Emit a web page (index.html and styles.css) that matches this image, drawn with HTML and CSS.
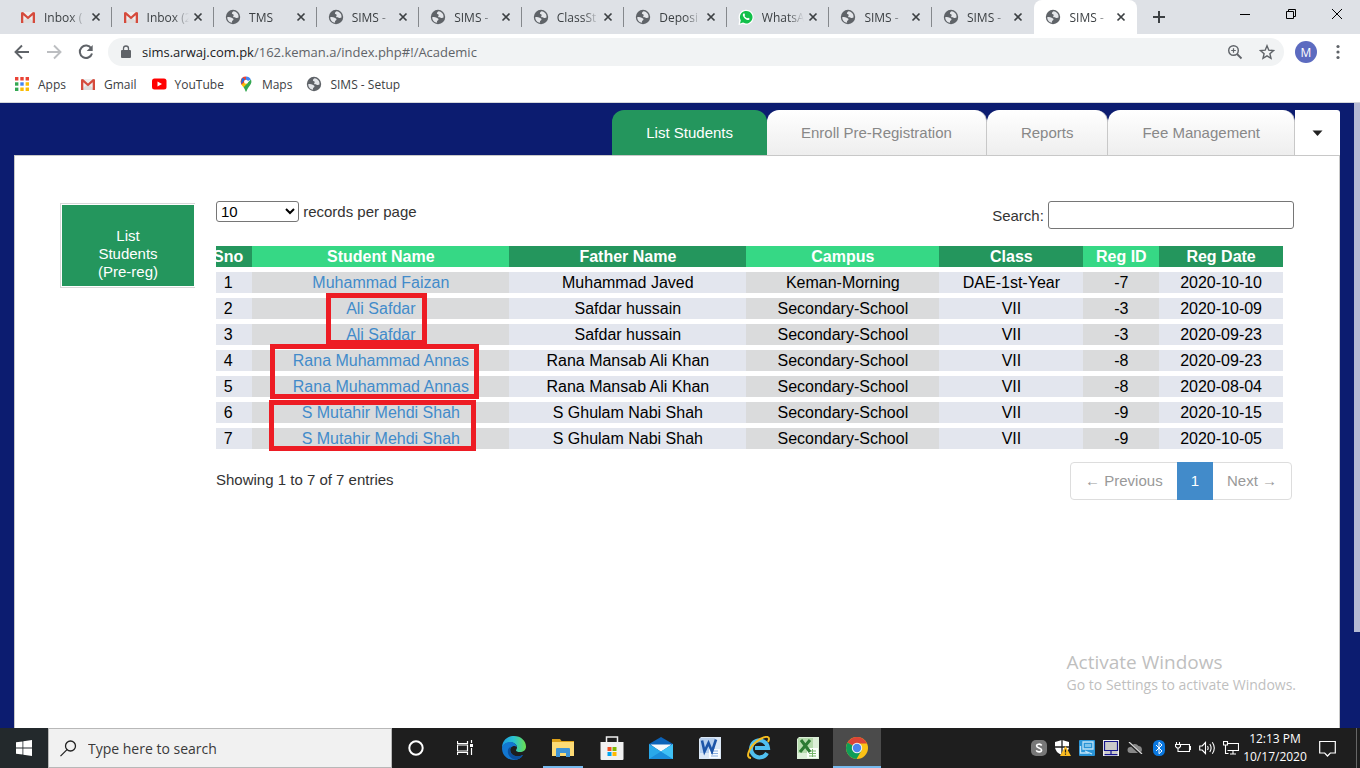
FILE: index.html
```html
<!DOCTYPE html>
<html lang="en">
<head>
<meta charset="utf-8">
<title>SIMS - Academic</title>
<link rel="stylesheet" href="styles.css">
</head>
<body>
<svg class="sprite" aria-hidden="true">
  <symbol id="globe" viewBox="0 0 16 16"><circle cx="8" cy="8" r="7.2" fill="#5f6368"/><path d="M8.6 2.3c-1.3.8-1.9 1.7-1.6 2.4.4.6 1.6.3 1.7 1.2.1.8-.9 1-.5 1.9.4.8 1.9.5 2.8 1.1.8.4 1.7.2 2.5-.3.4-3-1.4-5.9-4.900-6.300zM2.200 8.200c1.500-.3 3.300-.2 4.400.6.8.6 1.900.6 1.900 1.600s-1.300 1-1.500 1.900c-.1.500.2.900.1 1.500-2.800-.4-4.900-2.800-4.900-5.600z" fill="#e4e6ea"/></symbol>
  <symbol id="gmail" viewBox="0 0 16 16"><path d="M1 3h14v11H1z" fill="#eee"/><path d="M1 14 8 8l7 6z" fill="#ddd"/><path d="M1 14V3.500L3 3l5 4.500L13 3l2 .5V14h-2.300V6.200L8 10.200 3.300 6.200V14z" fill="#d54b3d"/></symbol>
  <symbol id="x" viewBox="0 0 10 10"><path d="m1.500 1.500 7 7m0-7-7 7" stroke="#3c4043" stroke-width="1.700" fill="none"/></symbol>
</svg>

<header class="browser">
  <div class="tabstrip">
    <div class="tabs">
      <div class="tab"><svg class="fav"><use href="#gmail"/></svg><a class="tab-title" href="#">Inbox (</a><button class="close" aria-label="Close tab"><svg><use href="#x"/></svg></button></div>
      <div class="tab"><svg class="fav"><use href="#gmail"/></svg><a class="tab-title" href="#">Inbox (2</a><button class="close" aria-label="Close tab"><svg><use href="#x"/></svg></button></div>
      <div class="tab"><svg class="fav"><use href="#globe"/></svg><a class="tab-title" href="#">TMS</a><button class="close" aria-label="Close tab"><svg><use href="#x"/></svg></button></div>
      <div class="tab"><svg class="fav"><use href="#globe"/></svg><a class="tab-title" href="#">SIMS -</a><button class="close" aria-label="Close tab"><svg><use href="#x"/></svg></button></div>
      <div class="tab"><svg class="fav"><use href="#globe"/></svg><a class="tab-title" href="#">SIMS -</a><button class="close" aria-label="Close tab"><svg><use href="#x"/></svg></button></div>
      <div class="tab"><svg class="fav"><use href="#globe"/></svg><a class="tab-title" href="#">ClassSt</a><button class="close" aria-label="Close tab"><svg><use href="#x"/></svg></button></div>
      <div class="tab"><svg class="fav"><use href="#globe"/></svg><a class="tab-title" href="#">Deposi</a><button class="close" aria-label="Close tab"><svg><use href="#x"/></svg></button></div>
      <div class="tab"><svg class="fav" viewBox="0 0 16 16"><path d="M.5 16 1.200 11A7.500 7.500 0 1 1 5 15z" fill="#fff"/><path d="m2 14.400.8-3A6.300 6.300 0 1 1 5 13.600z" fill="#12c04a"/><path d="M5.500 4.500c-1.300 1-.7 2.900 1 4.700 1.800 1.800 3.800 2.500 4.900 1.200.3-.5.2-.9 0-1l-1.300-.7c-.3-.1-.6.7-1 .6C7.900 8.800 7 7.900 6.600 7c-.1-.3.600-.6.500-1l-.6-1.300c-.2-.4-.7-.4-1-.2z" fill="#fff"/></svg><a class="tab-title" href="#">WhatsA</a><button class="close" aria-label="Close tab"><svg><use href="#x"/></svg></button></div>
      <div class="tab"><svg class="fav"><use href="#globe"/></svg><a class="tab-title" href="#">SIMS -</a><button class="close" aria-label="Close tab"><svg><use href="#x"/></svg></button></div>
      <div class="tab last"><svg class="fav"><use href="#globe"/></svg><a class="tab-title" href="#">SIMS -</a><button class="close" aria-label="Close tab"><svg><use href="#x"/></svg></button></div>
      <div class="tab active"><svg class="fav"><use href="#globe"/></svg><a class="tab-title" href="#">SIMS -</a><button class="close" aria-label="Close tab"><svg><use href="#x"/></svg></button></div>
    </div>
    <div class="newtab"><button aria-label="New tab"><svg width="14" height="14" viewBox="0 0 14 14"><path d="M7 1v12M1 7h12" stroke="#3c4043" stroke-width="2"/></svg></button></div>
    <div class="winctl">
      <button aria-label="Minimize"><svg width="12" height="12" viewBox="0 0 12 12"><path d="M1 6.500h10" stroke="#000"/></svg></button>
      <button aria-label="Restore"><svg width="12" height="12" viewBox="0 0 12 12"><path d="M1.500 3.500h7v7h-7zM3.500 3.500v-2h7v7h-2" stroke="#000" fill="none"/></svg></button>
      <button aria-label="Close"><svg width="12" height="12" viewBox="0 0 12 12"><path d="m1 1 10 10M11 1 1 11" stroke="#000"/></svg></button>
    </div>
  </div>
  <div class="toolbar">
    <button aria-label="Back"><svg width="16" height="16" viewBox="0 0 16 16"><path d="M15 8H2m6-6.500L1.500 8 8 14.500" stroke="#5f6368" stroke-width="1.900" fill="none"/></svg></button>
    <button aria-label="Forward"><svg width="16" height="16" viewBox="0 0 16 16"><path d="M1 8h13M8 1.500 14.500 8 8 14.500" stroke="#bcbec1" stroke-width="1.900" fill="none"/></svg></button>
    <button aria-label="Reload"><svg width="16" height="16" viewBox="0 0 16 16"><path d="M13.300 4.500A6.200 6.200 0 1 0 14 9.500" stroke="#5f6368" stroke-width="2" fill="none"/><path d="M14.700 1v6H8.700z" fill="#5f6368"/></svg></button>
    <div class="omnibox">
      <svg width="10" height="14" viewBox="0 0 10 14"><path d="M1 5h8q1 0 1 1v6q0 1-1 1H1q-1 0-1-1V6q0-1 1-1z" fill="#5f6368"/><path d="M2.500 5.500V3.500a2.500 2.500 0 0 1 5 0v2" stroke="#5f6368" stroke-width="1.300" fill="none"/></svg>
      <div class="url" role="textbox" aria-label="Address" contenteditable="true" spellcheck="false"><span class="host">sims.arwaj.com.pk</span>/162.keman.a/index.php#!/Academic</div>
      <button aria-label="Zoom"><svg width="16" height="16" viewBox="0 0 16 16"><circle cx="6.500" cy="6.500" r="4.800" stroke="#5f6368" stroke-width="1.400" fill="none"/><path d="m10 10 4.500 4.500" stroke="#5f6368" stroke-width="1.800"/><path d="M6.500 4.200v4.600M4.200 6.500h4.600" stroke="#5f6368" stroke-width="1.200"/></svg></button>
      <button aria-label="Bookmark"><svg width="16" height="16" viewBox="0 0 16 16"><path d="m8 1.800 1.800 4.400 4.700.4-3.600 3.100 1.100 4.600L8 11.900l-4 2.400 1.100-4.600-3.600-3.100 4.700-.4z" stroke="#5f6368" stroke-width="1.400" fill="none"/></svg></button>
    </div>
    <button class="avatar" aria-label="Profile">M</button>
    <button class="kebab" aria-label="Menu"><svg width="4" height="16" viewBox="0 0 4 16"><g fill="#5f6368"><circle cx="2" cy="2.500" r="1.600"/><circle cx="2" cy="8" r="1.600"/><circle cx="2" cy="13.500" r="1.600"/></g></svg></button>
  </div>
  <nav class="bookmarks">
    <a href="#"><svg class="fav" viewBox="0 0 16 16"><path d="M1 1h3.400v3.400H1zM6.300 1h3.400v3.400H6.300zM11.600 1H15v3.400h-3.400z" fill="#ea4335"/><path d="M1 6.300h3.400v3.400H1z" fill="#34a853"/><path d="M6.300 6.300h3.400v3.400H6.300z" fill="#4285f4"/><path d="M11.600 6.300H15v3.400h-3.400zM6.300 11.600h3.400V15H6.300zM11.600 11.600H15V15h-3.400z" fill="#fbbc05"/><path d="M1 11.600h3.400V15H1z" fill="#34a853"/></svg>Apps</a>
    <a href="#"><svg class="fav"><use href="#gmail"/></svg>Gmail</a>
    <a href="#"><svg class="fav" viewBox="0 0 16 16"><rect x="1" y="2.500" width="14.500" height="11" rx="2.500" fill="red"/><path d="m6.500 5.500 4.500 2.500-4.500 2.500z" fill="#fff"/></svg>YouTube</a>
    <a href="#"><svg class="fav" viewBox="0 0 16 16"><path d="M2.600 5.500A5.500 5.500 0 0 1 8 .5L8 5.800 4.200 9.500Q2.600 7.800 2.600 5.500z" fill="#ea4335"/><path d="M8 .5a5.500 5.500 0 0 1 4.900 2.900L8 6z" fill="#4285f4"/><path d="M4 2 3 8l2-2 2-3z" fill="#1a73e8"/><path d="m12.900 3.400c1 2 .5 4.200-1 6C10.300 11.600 9 13 8.500 15.500H7.500C7.200 13.500 6 12 5.400 11z" fill="#34a853"/><path d="M3.500 8.600 8 5.500l1.500 1.800-4.100 4z" fill="#fbbc04"/><circle cx="8" cy="5.700" r="2" fill="#fff"/></svg>Maps</a>
    <a href="#"><svg class="fav"><use href="#globe"/></svg>SIMS - Setup</a>
  </nav>
</header>

<main class="viewport">
  <div class="page">
    <nav class="modules">
      <a class="on" href="#">List Students</a>
      <a href="#">Enroll Pre-Registration</a>
      <a href="#">Reports</a>
      <a href="#">Fee Management</a>
      <button aria-label="More"><svg width="11" height="6" viewBox="0 0 11 6"><path d="M.5.500h10L5.500 6z" fill="#222"/></svg></button>
    </nav>
    <div class="panel">
      <aside class="side"><a href="#">List<br>Students<br>(Pre-reg)</a></aside>
      <section class="content">
        <div class="controls">
          <label class="length"><select><option>10</option><option>25</option></select> records per page</label>
          <label class="search">Search: <input type="text"></label>
        </div>
        <div class="table-wrap">
          <table>
            <colgroup><col class="c1"><col class="c2"><col class="c3"><col class="c4"><col class="c5"><col class="c6"><col class="c7"></colgroup>
            <thead><tr><th><span>Sno</span></th><th>Student Name</th><th>Father Name</th><th>Campus</th><th>Class</th><th>Reg ID</th><th>Reg Date</th></tr></thead>
            <tbody>
              <tr><td>1</td><td><a href="#">Muhammad Faizan</a></td><td>Muhammad Javed</td><td>Keman-Morning</td><td>DAE-1st-Year</td><td>-7</td><td>2020-10-10</td></tr>
              <tr><td>2</td><td><a href="#">Ali Safdar</a></td><td>Safdar hussain</td><td>Secondary-School</td><td>VII</td><td>-3</td><td>2020-10-09</td></tr>
              <tr><td>3</td><td><a href="#">Ali Safdar</a></td><td>Safdar hussain</td><td>Secondary-School</td><td>VII</td><td>-3</td><td>2020-09-23</td></tr>
              <tr><td>4</td><td><a href="#">Rana Muhammad Annas</a></td><td>Rana Mansab Ali Khan</td><td>Secondary-School</td><td>VII</td><td>-8</td><td>2020-09-23</td></tr>
              <tr><td>5</td><td><a href="#">Rana Muhammad Annas</a></td><td>Rana Mansab Ali Khan</td><td>Secondary-School</td><td>VII</td><td>-8</td><td>2020-08-04</td></tr>
              <tr><td>6</td><td><a href="#">S Mutahir Mehdi Shah</a></td><td>S Ghulam Nabi Shah</td><td>Secondary-School</td><td>VII</td><td>-9</td><td>2020-10-15</td></tr>
              <tr><td>7</td><td><a href="#">S Mutahir Mehdi Shah</a></td><td>S Ghulam Nabi Shah</td><td>Secondary-School</td><td>VII</td><td>-9</td><td>2020-10-05</td></tr>
            </tbody>
          </table>
          <div class="mark mark-a"></div>
          <div class="mark mark-b"></div>
          <div class="mark mark-c"></div>
        </div>
        <div class="footer">
          <p>Showing 1 to 7 of 7 entries</p>
          <div class="pager"><a href="#">← Previous</a><a class="current" href="#">1</a><a href="#">Next →</a></div>
        </div>
      </section>
    </div>
  </div>
  <div class="scroll"><div class="thumb"></div></div>
  <div class="watermark"><strong>Activate Windows</strong><span>Go to Settings to activate Windows.</span></div>
</main>

<footer class="taskbar">
  <button class="start" aria-label="Start"><svg width="16" height="16" viewBox="0 0 16 16"><path d="M0 2.300 6.500 1.400v6.200H0zM7.300 1.300 16 0v7.600H7.300zM0 8.400h6.500v6.200L0 13.700zM7.300 8.400H16V16l-8.700-1.300z" fill="#fff"/></svg></button>
  <label class="find"><svg width="17" height="17" viewBox="0 0 17 17"><circle cx="10.500" cy="6" r="5" stroke="#222" stroke-width="1.300" fill="none"/><path d="m7 9.600-6.500 6.500" stroke="#222" stroke-width="1.300"/></svg><input type="text" placeholder="Type here to search" aria-label="Search"></label>
  <div class="apps">
    <button aria-label="Cortana"><svg width="16" height="16" viewBox="0 0 16 16"><circle cx="8" cy="8" r="6.700" stroke="#fff" stroke-width="2" fill="none"/></svg></button>
    <button aria-label="Task View"><svg width="16" height="16" viewBox="0 0 16 16"><path d="M.5 1v2.500h10V1M.5 15v-2.500h10V15M.5 5h10v6H.5zM14.500 0v3M14.500 8v7" stroke="#fff" stroke-width="1.200" fill="none"/><path d="M13 4h3v3h-3z" fill="#fff"/></svg></button>
    <button aria-label="Edge"><svg width="24" height="24" viewBox="0 0 24 24"><defs><linearGradient id="eg"><stop offset="0" stop-color="#1b9de2"/><stop offset=".5" stop-color="#2bc3d0"/><stop offset="1" stop-color="#6be04d"/></linearGradient></defs><path d="M0 12C0 5 5 0 12 0s12 5 12 10.500c0 4-3 5.500-6 5.500-2.500 0-4-.8-4-1.800 0-.7 1-1.200 1-2.700C15 8.500 12 6.500 8.500 6.500 4 6.500 1 9 0 12z" fill="url(#eg)"/><path d="M0 12c.5-3.500 4-6 8-6 3.500 0 6.500 2 6.700 5-1-1-2.200-1.300-3.200-1C8 11 7.500 14 9 17c2 3.500 7 4.500 12 2-2 3.500-5.500 5-9 5C5 24 0 19 0 12z" fill="#1277d1"/><path d="M9 10.500c-3 1.500-4 4.500-2.500 8 1.200 2.800 4 4.800 7 5.300 3.500-.3 6-2.300 7.500-4.800-5 2.500-10 1-12-2-1.300-2.300-1-5 0-6.500z" fill="#0c4f9c"/></svg></button>
    <button class="running" aria-label="File Explorer"><svg width="22" height="20" viewBox="0 0 22 20"><path d="M0 1h8l1.500 2H22v5H0z" fill="#dca018"/><path d="M0 4h22v14H0z" fill="#fddb75"/><path d="M4 19v-8q0-1 1-1h12q1 0 1 1v8h-4v-4H8v4z" fill="#3f94d6"/></svg></button>
    <button aria-label="Store"><svg width="24" height="24" viewBox="0 0 24 24"><path d="M6.500 7V1h11v6" stroke="#eee" stroke-width="1.500" fill="none"/><path d="M.5 6h23v17q0 1-1 1h-21q-1 0-1-1z" fill="#f1f1f1"/><path d="M7.500 11h4v4h-4z" fill="#f25022"/><path d="M12.500 11h4v4h-4z" fill="#7fba00"/><path d="M7.500 16h4v4h-4z" fill="#00a4ef"/><path d="M12.500 16h4v4h-4z" fill="#ffb900"/></svg></button>
    <button aria-label="Mail"><svg width="24" height="22" viewBox="0 0 24 22"><path d="M0 7 12 0l12 7v5H0z" fill="#0b62b8"/><path d="M1.500 7.500h21L12 15z" fill="#f5f8fb"/><path d="M0 7v15h24V7L12 14.500z" fill="#29a8ea"/><path d="M0 22 12 14.500 24 22z" fill="#1b8edb"/><path d="M24 7 12 14.500 24 22z" fill="#40c1f5"/></svg></button>
    <button aria-label="Word"><svg width="22" height="22" viewBox="0 0 22 22"><path d="M2 0h20v22H0V2z" fill="#dce8f6"/><path d="M1 1h15v15H1z" fill="#b8d0ee"/><path d="M10 12h11v9H10z" fill="#f9fcff"/><path d="M12 14h7M12 16.500h7M12 19h7" stroke="#8aafe0"/><path d="m3 3.500 2.500 11L9.500 6 13 14.500l4-12" stroke="#1d55a8" stroke-width="2.600" fill="none"/></svg></button>
    <button aria-label="Internet Explorer"><svg width="24" height="24" viewBox="0 0 24 24"><path d="M20 17a8.500 8.500 0 1 1 1-5H8" stroke="#50bfef" stroke-width="4" fill="none"/><path d="M4 22C-2 22 2 12 9 6 15 1 22-1 22 3c0 1-.5 2-1 3" stroke="#f5bd20" stroke-width="2" fill="none"/></svg></button>
    <button aria-label="Excel"><svg width="22" height="22" viewBox="0 0 22 22"><path d="M2 0h20v22H0V2z" fill="#dcefd8"/><path d="M1 1h15v15H1z" fill="#b5dbad"/><path d="M10 11h11v10H10z" fill="#fafffa"/><path d="M12 14h7M12 16.500h7M12 19h7M15.500 12v8" stroke="#77b66c"/><path d="m4 3 9 12M13 3 3 15" stroke="#2b7a32" stroke-width="3" fill="none"/></svg></button>
    <button class="running focus" aria-label="Chrome"><svg width="22" height="22" viewBox="0 0 22 22"><circle cx="11" cy="11" r="11" fill="#fbc116"/><path d="M11 11 1.500 5.500A11 11 0 0 1 20.500 5.500L21 6.500H11z" fill="#db4437"/><path d="M1.500 5.500A11 11 0 0 0 10.500 22l5-8.500L11 11z" fill="#0f9d58"/><circle cx="11" cy="11" r="5.200" fill="#f3f3f3"/><circle cx="11" cy="11" r="4.200" fill="#4a85ee"/></svg></button>
  </div>
  <div class="tray">
    <button aria-label="Skype"><svg width="16" height="16" viewBox="0 0 16 16"><rect width="16" height="16" rx="5" fill="#777"/><path d="M10.700 5.500C9.500 3.500 5.600 3.800 5.600 6S10.600 7.700 10.600 10 6.500 12.500 5.200 10.400" stroke="#fff" stroke-width="1.600" fill="none"/></svg></button>
    <button aria-label="Security"><svg width="16" height="16" viewBox="0 0 16 16"><path d="M7 0 14 2v5q0 5-7 8Q0 12 0 7V2z" fill="#fff"/><path d="M7 0v15M0 7h14" stroke="#1e1e1e" stroke-width="1.300"/><path d="M10.500 6 16 16H5z" fill="#fbbc20"/><path d="M10.500 9.500v3M10.500 13.500v1.200" stroke="#222" stroke-width="1.200"/></svg></button>
    <button aria-label="Network monitor"><svg width="16" height="16" viewBox="0 0 16 16"><rect width="16" height="16" rx="1" fill="#2a94d6"/><path d="M4 2h10v7H4zM1.500 6v7h8M6 11l7 3" fill="none" stroke="#bfe2f7" stroke-width="1.300"/><path d="M6 4h6v3H6z" fill="#7fc3ea"/></svg></button>
    <button aria-label="Touchpad"><svg width="16" height="16" viewBox="0 0 16 16"><path d="M.7.700h14.600v14.600H.7z" fill="#c9c9c9" stroke="#eee" stroke-width="1.400"/><path d="M1.500 1.500h13v9h-13zM8 11v4M1.500 14.700h13" stroke="#14148c" stroke-width="1.200" fill="none"/></svg></button>
    <button aria-label="OneDrive"><svg width="16" height="12" viewBox="0 0 16 12"><path d="M3.500 11a3 3 0 0 1 0-6 4.500 4.500 0 0 1 8-1 3.600 3.600 0 0 1 1 7z" fill="#888"/><path d="m1 0 13 12" stroke="#1e1e1e" stroke-width="2.600"/><path d="m2 0 13 12" stroke="#ddd" stroke-width="1.200"/></svg></button>
    <button aria-label="Bluetooth"><svg width="12" height="16" viewBox="0 0 12 16"><rect width="12" height="16" rx="5.500" fill="#0a78e0"/><path d="m3 5 6 6-3 2.700V2.300L9 5l-6 6" stroke="#fff" fill="none"/></svg></button>
    <button aria-label="Battery"><svg width="16" height="12" viewBox="0 0 16 12"><path d="M6 2.500h8.500v7H4.500M14.500 4.500h1v3h-1M1.500 0v2M4.500 0v2M.5 2.500h5v2l-1.500 1.500H2L.5 4.500zM3 6v3.500h1.500" stroke="#fff" stroke-width="1.100" fill="none"/></svg></button>
    <button aria-label="Volume"><svg width="17" height="14" viewBox="0 0 17 14"><path d="M.7 5h2.500L6.500 1.500v11L3.200 9H.7zM8.500 5q1.300 2 0 4M10.800 3q2.600 4 0 8M13.300 1.200q4 5.800 0 11.600" stroke="#fff" stroke-width="1.100" fill="none"/></svg></button>
    <button aria-label="Network"><svg width="16" height="14" viewBox="0 0 16 14"><path d="M4 2.500h11.500v7H4.500M.5.500h4v3.500h-4zM2.500 4v8.500h3M10 9.500v3M7 13h6" stroke="#fff" stroke-width="1.100" fill="none"/></svg></button>
    <button class="clock"><span>12:13 PM</span><span>10/17/2020</span></button>
    <button class="notes" aria-label="Notifications"><svg width="17" height="17" viewBox="0 0 17 17"><path d="M.7 1.500h15.600v11.500h-5l-2.800 3-2.800-3h-5z" stroke="#fff" stroke-width="1.200" fill="none"/></svg></button>
    <div class="peek"></div>
  </div>
</footer>
</body>
</html>
```
FILE: styles.css
```css
* { box-sizing: border-box; }
body {
  margin: 0;
  height: 100vh;
  display: flex;
  flex-direction: column;
  overflow: hidden;
  font-family: "Liberation Sans", Arial, sans-serif;
  font-size: 15px;
  color: #333;
}
button {
  border: 0;
  background: none;
  padding: 0;
  font: inherit;
  color: inherit;
  display: flex;
  align-items: center;
  justify-content: center;
}
a { text-decoration: none; color: inherit; }
svg { display: block; flex: none; }
.sprite { position: absolute; width: 0; height: 0; }
.fav { width: 16px; height: 16px; }

/* Browser frame */
.browser {
  flex: none;
  font-family: "Open Sans", sans-serif;
  font-size: 12px;
  color: #3c4043;
  background: #fff;
  border-bottom: 1px solid #d5d7db;
}
.tabstrip { display: flex; height: 34px; background: #dee1e6; padding-left: 9px; }
.tabs { display: flex; flex: 1; min-width: 0; }
.tab {
  flex: 1 1 0;
  min-width: 0;
  display: flex;
  align-items: center;
  padding: 0 8px 0 11px;
  background: linear-gradient(#85888c, #85888c) right 7px / 1px 20px no-repeat;
}
.tab.last { background: none; }
.tab.active { background: #fff; border-radius: 8px 8px 0 0; }
.tab-title {
  flex: 1;
  min-width: 0;
  margin-left: 8px;
  white-space: nowrap;
  -webkit-mask-image: linear-gradient(to right, #000 26px, transparent 42px);
  mask-image: linear-gradient(to right, #000 26px, transparent 42px);
}
.close { width: 16px; height: 16px; }
.close svg { width: 10px; height: 10px; }
.newtab { flex: 0 0 85px; display: flex; align-items: center; }
.newtab button { width: 44px; }
.winctl { display: flex; height: 28px; }
.winctl button { width: 46px; }
.toolbar { display: flex; align-items: center; height: 36px; padding: 0 10px 0 6px; }
.toolbar > button { width: 32px; height: 32px; }
.omnibox {
  flex: 1;
  display: flex;
  align-items: center;
  height: 28px;
  margin: 0 6px;
  padding: 0 1px 0 13px;
  border-radius: 14px;
  background: #f1f3f4;
  font-size: 13px;
  color: #5f6368;
}
.omnibox button { width: 32px; height: 28px; }
.url { flex: 1; margin-left: 11px; white-space: nowrap; }
.host { color: #202124; }
.toolbar .avatar {
  width: 22px;
  height: 22px;
  margin: 0 9px 0 5px;
  border-radius: 50%;
  background: #5c6bc0;
  color: #fff;
}
.toolbar .kebab { width: 24px; }
.bookmarks { display: flex; align-items: center; gap: 14px; height: 32px; padding: 0 14px 4px; }
.bookmarks a { display: flex; align-items: center; gap: 8px; }

/* Web page */
.viewport { flex: 1; min-height: 0; display: flex; position: relative; background: #0c1c70; }
.page { flex: 1; min-width: 0; display: flex; flex-direction: column; padding: 7px 14px 0; }
.modules { display: flex; justify-content: flex-end; height: 45px; color: #888; }
.modules a {
  display: flex;
  align-items: center;
  padding: 0 34px;
  border-right: 1px solid #c8c8c8;
  border-radius: 12px 12px 0 0;
  background: linear-gradient(#fff, #eee);
}
.modules .on { background: #24965d; color: #fff; border-right: 0; }
.modules button { width: 45px; background: #fff; border-radius: 0 3px 0 0; }
.panel {
  flex: 1;
  display: flex;
  gap: 21px;
  padding: 45px 45px 0;
  background: #fff;
  border: 1px solid #c8c8c8;
  border-bottom: 0;
}
.side { flex: 0 0 135px; padding-top: 2px; }
.side a {
  display: block;
  padding: 23px 0 6px;
  border: 1px solid #d8d8d8;
  border-right: 0;
  background: #24965d;
  box-shadow: inset 0 0 0 1px #fff;
  color: #fff;
  line-height: 18px;
  text-align: center;
}
.content { flex: 1; min-width: 0; }
.controls { display: flex; justify-content: space-between; align-items: flex-start; height: 45px; }
.length { line-height: 21px; }
select {
  width: 83px;
  height: 21px;
  border: 1px solid #767676;
  border-radius: 3px;
  background: #fff;
  color: #000;
  font: 15px "Liberation Sans", Arial, sans-serif;
}
.search input { width: 246px; height: 28px; margin: 0; border: 1px solid #767676; border-radius: 3px; font: inherit; }
.table-wrap { position: relative; margin-right: 11px; overflow: hidden; }
table { width: 100%; table-layout: fixed; border-collapse: separate; border-spacing: 0; color: #000; font-size: 16px; }
.c1 { width: 3.4%; }
.c2 { width: 24.1%; }
.c3 { width: 22.2%; }
.c4 { width: 18.1%; }
.c5 { width: 13.5%; }
.c6 { width: 7.1%; }
.c7 { width: 11.6%; }
th, td { padding: 0; height: 26px; line-height: 21px; text-align: center; white-space: nowrap; border-bottom: 5px solid #fff; }
th { background: #24965d; color: #fff; }
th:nth-child(even) { background: #36d885; }
th:first-child, td:first-child { padding-right: 12px; }
th:first-child span { display: flex; justify-content: center; }
td { background: #e3e6ee; }
td:nth-child(even) { background: #dadbdc; }
td a { color: #428bca; }
.mark { position: absolute; border: 5px solid #ed1c24; }
.mark-a { left: 110px; top: 47px; width: 101px; height: 52px; }
.mark-b { left: 54px; top: 98px; width: 209px; height: 55px; }
.mark-c { left: 53px; top: 154px; width: 207px; height: 51px; }
.footer { display: flex; justify-content: space-between; align-items: flex-start; padding: 8px 2px 0 0; }
.footer p { margin: 9px 0 0; }
.pager { display: flex; border: 1px solid #ddd; border-radius: 4px; color: #999; }
.pager a { padding: 0 14px; line-height: 36px; }
.pager .current { margin: -1px 0; line-height: 38px; background: #428bca; color: #fff; }
.scroll { flex: 0 0 6px; }
.thumb { height: 529px; max-height: 85%; background: #b5bad4; }
.watermark {
  position: absolute;
  right: 64px;
  bottom: 32px;
  display: flex;
  flex-direction: column;
  font-family: "Open Sans", sans-serif;
  font-size: 14px;
  line-height: 22px;
  color: #bfbfbf;
}
.watermark strong { font-size: 19px; font-weight: 400; line-height: 24px; }

/* Taskbar */
.taskbar {
  flex: none;
  display: flex;
  height: 40px;
  background: #1e1e1e;
  color: #fff;
  font-family: "Open Sans", sans-serif;
}
.start { width: 48px; background: #23292c; }
.find {
  width: 344px;
  display: flex;
  align-items: center;
  gap: 11px;
  padding: 0 11px;
  background: #f1f1f1;
  border: 1px solid #b8b8b8;
}
.find input { flex: 1; min-width: 0; border: 0; padding: 0; background: none; font: 14px "Open Sans", sans-serif; }
.find input::placeholder { color: #3a3a3a; opacity: 1; }
.apps { display: flex; gap: 1px; }
.apps button { width: 48px; height: 40px; }
.apps .running { background: linear-gradient(#76b9ed, #76b9ed) center bottom / 40px 2px no-repeat; }
.apps .focus { background: linear-gradient(#76b9ed, #76b9ed) center bottom / 48px 2px no-repeat #4b4b4b; }
.tray { display: flex; margin-left: auto; }
.tray button { width: 24px; }
.tray .clock { width: 64px; flex-direction: column; font-size: 12px; line-height: 18px; }
.tray .notes { width: 40px; }
.peek { width: 4px; margin-left: 9px; border-left: 1px solid #666; }
```
